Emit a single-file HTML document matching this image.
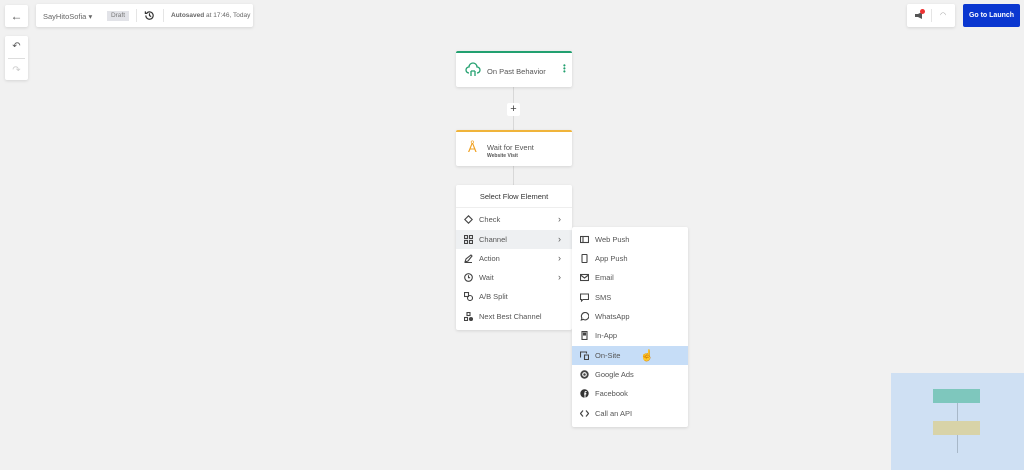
<!DOCTYPE html><html><head><style>
body{margin:0;width:1024px;height:470px;background:#f1f1f1;font-family:"Liberation Sans",sans-serif;position:relative;overflow:hidden;color:#444}
.a{position:absolute}
.box{position:absolute;background:#fff;box-shadow:0 1px 3px rgba(0,0,0,.12);border-radius:2px}
.t{font-size:7.5px;color:#555}
.mi{position:absolute;left:0;width:116px;height:19px;font-size:7.5px;color:#555;line-height:19px}
.mi svg{position:absolute;left:8px;top:5px}
.mi b{font-weight:normal;position:absolute;left:23px}
.mi i{position:absolute;right:11px;font-style:normal;font-size:9px}
</style></head><body>
<div class="box" style="left:5px;top:5px;width:23px;height:22px;text-align:center;line-height:22px;font-size:12px;color:#555">←</div>
<div class="box" style="left:36px;top:4px;width:217px;height:23px">
 <span class="a t" style="left:7px;top:8px;color:#666">SayHitoSofia ▾</span>
 <span class="a" style="left:71px;top:7px;width:22px;height:10px;background:#e2e3e8;font-size:6.5px;color:#777;text-align:center;line-height:10px">Draft</span>
 <div class="a" style="left:100px;top:5px;width:1px;height:13px;background:#e5e5e5"></div>
 <svg class="a" style="left:108px;top:6px" width="11" height="11" viewBox="0 0 12 12" fill="none" stroke="#333" stroke-width="1.3"><path d="M2 6a4 4 0 1 0 1.2-2.8M1.5 1.5v2.2h2.2M6 3.5V6l1.8 1.2"/></svg>
 <div class="a" style="left:127px;top:5px;width:1px;height:13px;background:#e5e5e5"></div>
 <span class="a" style="left:135px;top:8px;font-size:6.5px;color:#666"><b>Autosaved</b> at 17:46, Today</span>
</div>
<div class="box" style="left:5px;top:36px;width:23px;height:44px;text-align:center;font-size:10px;color:#555">
 <div style="margin-top:5px">↶</div><div style="height:1px;background:#ddd;margin:6px 3px"></div><div style="color:#ccc">↷</div></div>
<div class="box" style="left:907px;top:4px;width:48px;height:23px">
 <svg class="a" style="left:8px;top:8px" width="9" height="8" viewBox="0 0 9 8" fill="#555"><path d="M0 2h3l4-2v7L3 5H0z"/></svg>
 <span class="a" style="left:13px;top:5px;width:5px;height:5px;border-radius:3px;background:#e33"></span>
 <div class="a" style="left:24px;top:5px;width:1px;height:13px;background:#e5e5e5"></div>
 <span class="a" style="left:33px;top:7px;font-size:7px;color:#999">◠</span></div>
<div class="a" style="left:963px;top:4px;width:57px;height:23px;background:#0a37d0;border-radius:2px;color:#fff;font-size:7px;font-weight:bold;text-align:center;line-height:23px">Go to Launch</div>
<div class="a" style="left:513px;top:87px;width:1px;height:98px;background:#d8d8d8"></div>
<div class="box" style="left:456px;top:51px;width:116px;height:36px;border-top:2px solid #22a070;box-sizing:border-box">
 <svg class="a" style="left:9px;top:9px" width="16" height="16" viewBox="0 0 16 16" fill="none" stroke="#23a06f" stroke-width="1.3"><path d="M4 11a3 3 0 0 1 0-6 4 4 0 0 1 8 0 3 3 0 0 1 0 6"/><path d="M6 9v5M10 9v5M6 9h4"/></svg>
 <span class="a t" style="left:31px;top:14px">On Past Behavior</span>
 <span class="a" style="left:107px;top:11px;width:2px;line-height:3px;font-size:8px;color:#23a06f">•<br>•<br>•</span></div>
<div class="box" style="left:507px;top:103px;width:13px;height:13px;text-align:center;line-height:13px;font-size:11px;box-shadow:none">+</div>
<div class="box" style="left:456px;top:130px;width:116px;height:36px;border-top:2px solid #f0b43a;box-sizing:border-box">
 <span class="a" style="left:12px;top:8px;font-size:13px;color:#f0a020">Å</span>
 <span class="a t" style="left:31px;top:11px">Wait for Event</span>
 <span class="a" style="left:31px;top:21px;font-size:5px;color:#555;font-weight:bold">Website Visit</span></div>
<div class="box" style="left:456px;top:185px;width:116px;height:145px">
 <div style="height:22px;line-height:24px;text-align:center;font-size:7.5px;color:#333;border-bottom:1px solid #eee">Select Flow Element</div>
 <div class="mi" style="top:25px"><svg width="9" height="9" viewBox="0 0 9 9" fill="none" stroke="#444" stroke-width="1.1"><path d="M4.5 .8L8.2 4.5 4.5 8.2.8 4.5z"/></svg><b>Check</b><i>›</i></div>
 <div class="mi" style="top:45px;background:#eef0f2"><svg width="9" height="9" viewBox="0 0 9 9" fill="none" stroke="#444" stroke-width="1.1"><rect x=".5" y=".5" width="3" height="3"/><rect x="5.5" y=".5" width="3" height="3"/><rect x=".5" y="5.5" width="3" height="3"/><rect x="5.5" y="5.5" width="3" height="3"/></svg><b>Channel</b><i>›</i></div>
 <div class="mi" style="top:64px"><svg width="9" height="9" viewBox="0 0 9 9" fill="none" stroke="#444" stroke-width="1.1"><path d="M1 8l1-3 5-4 1 1-4 5zM1 8.5h7"/></svg><b>Action</b><i>›</i></div>
 <div class="mi" style="top:83px"><svg width="9" height="9" viewBox="0 0 9 9" fill="none" stroke="#444" stroke-width="1.1"><circle cx="4.5" cy="4.5" r="3.8"/><path d="M4.5 2.3v2.4h1.6"/></svg><b>Wait</b><i>›</i></div>
 <div class="mi" style="top:102px"><svg width="9" height="9" viewBox="0 0 9 9" fill="none" stroke="#444" stroke-width="1.1"><rect x=".5" y=".5" width="4" height="4"/><circle cx="6" cy="6" r="2.5"/></svg><b>A/B Split</b></div>
 <div class="mi" style="top:122px"><svg width="9" height="9" viewBox="0 0 9 9" fill="none" stroke="#444" stroke-width="1.1"><rect x="3" y=".5" width="3" height="3"/><rect x=".5" y="5.5" width="3" height="3"/><circle cx="7" cy="7" r="1.5" fill="#444"/></svg><b>Next Best Channel</b></div>
</div>
<div class="box" style="left:572px;top:227px;width:116px;height:200px">
 <div class="mi" style="top:3px"><svg width="9" height="9" viewBox="0 0 9 9" fill="none" stroke="#444" stroke-width="1.1"><rect x=".5" y="1.5" width="8" height="6"/><path d="M3 1.5v6"/></svg><b>Web Push</b></div>
 <div class="mi" style="top:22px"><svg width="9" height="9" viewBox="0 0 9 9" fill="none" stroke="#444" stroke-width="1.1"><rect x="2" y=".5" width="5" height="8" rx=".5"/></svg><b>App Push</b></div>
 <div class="mi" style="top:41px"><svg width="9" height="9" viewBox="0 0 9 9" fill="none" stroke="#444" stroke-width="1.1"><rect x=".5" y="1.5" width="8" height="6"/><path d="M.5 2l4 3 4-3"/></svg><b>Email</b></div>
 <div class="mi" style="top:61px"><svg width="9" height="9" viewBox="0 0 9 9" fill="none" stroke="#444" stroke-width="1.1"><path d="M.5 1h8v5.5H3L1.5 8V6.5h-1z"/></svg><b>SMS</b></div>
 <div class="mi" style="top:80px"><svg width="9" height="9" viewBox="0 0 9 9" fill="none" stroke="#444" stroke-width="1.1"><path d="M1.3 8l.6-2a3.7 3.7 0 1 1 1.4 1.4z"/></svg><b>WhatsApp</b></div>
 <div class="mi" style="top:99px"><svg width="9" height="9" viewBox="0 0 9 9" fill="none" stroke="#444" stroke-width="1.1"><rect x="2" y=".5" width="5" height="8"/><rect x="3.5" y="2" width="2" height="2" fill="#444"/></svg><b>In-App</b></div>
 <div class="mi" style="top:119px;background:#c6ddf7"><svg width="9" height="9" viewBox="0 0 9 9" fill="none" stroke="#444" stroke-width="1.1"><path d="M.5 6.5V1h6v1.5M4.5 4h4v4.5h-4z"/></svg><b>On-Site</b><span class="a" style="left:68px;top:1px;font-size:11px;color:#222">☝</span></div>
 <div class="mi" style="top:138px"><svg width="9" height="9" viewBox="0 0 9 9"><circle cx="4.5" cy="4.5" r="4.2" fill="#444"/><circle cx="4.5" cy="4.5" r="1.8" fill="none" stroke="#fff" stroke-width="1.1"/></svg><b>Google Ads</b></div>
 <div class="mi" style="top:157px"><svg width="9" height="9" viewBox="0 0 9 9"><circle cx="4.5" cy="4.5" r="4.2" fill="#333"/><path d="M5 9V4.5h1.3M5 9V3.5q0-1 1-1h.6M4 5h2.3" stroke="#fff" stroke-width="1" fill="none"/></svg><b>Facebook</b></div>
 <div class="mi" style="top:177px"><svg width="9" height="9" viewBox="0 0 9 9" fill="none" stroke="#444" stroke-width="1.2"><path d="M3 1.5L.5 4.5 3 7.5M6 1.5l2.5 3L6 7.5"/></svg><b>Call an API</b></div>
</div>
<div class="a" style="left:891px;top:373px;width:133px;height:97px;background:#cfe0f3">
 <div class="a" style="left:42px;top:16px;width:47px;height:14px;background:#7ec7bd"></div>
 <div class="a" style="left:66px;top:30px;width:1px;height:50px;background:#a8b8c8"></div>
 <div class="a" style="left:42px;top:48px;width:47px;height:14px;background:#d8d3a8"></div>
</div>
</body></html>
